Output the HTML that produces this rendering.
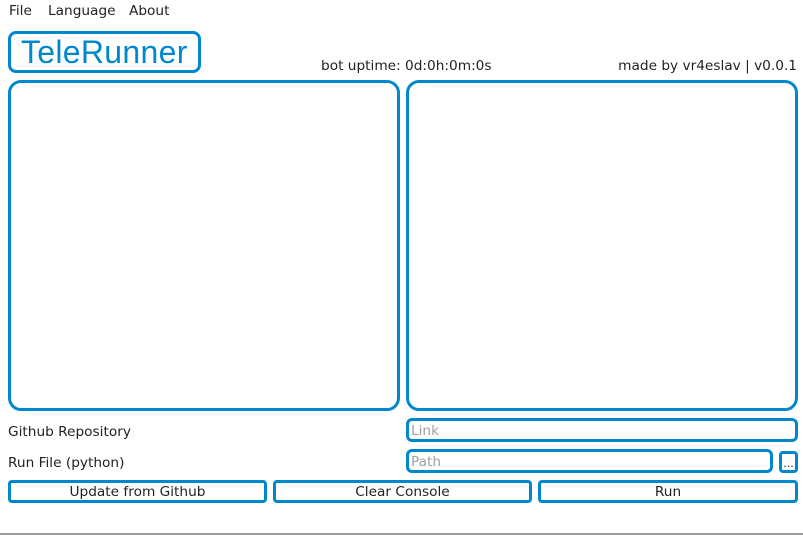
<!DOCTYPE html>
<html><head><meta charset="utf-8"><style>
*{box-sizing:border-box;margin:0;padding:0}
body{width:803px;height:535px;background:#fff;position:relative;overflow:hidden;font-family:"DejaVu Sans","Liberation Sans",sans-serif;font-size:13.7px;color:#222}
.a{position:absolute;white-space:nowrap}
.b{position:absolute;border:3px solid #0088cc}
.btn{display:flex;align-items:center;justify-content:center;border-radius:4px;padding-top:1px}
.ph{color:#a0a0a0;padding-left:2px;padding-top:2px;display:flex;align-items:center;border-radius:6px}
</style></head><body>
<div class="a" style="left:9px;top:3px">File</div>
<div class="a" style="left:48px;top:3px">Language</div>
<div class="a" style="left:129px;top:3px">About</div>
<div class="b" style="left:8px;top:31px;width:193px;height:42px;border-radius:8px"></div>
<div class="a" style="left:21px;top:34px;font-size:32px;color:#0088cc;font-family:'Liberation Sans',sans-serif;letter-spacing:0.3px">TeleRunner</div>
<div class="a" style="left:321px;top:58px">bot uptime:&nbsp;0d:0h:0m:0s</div>
<div class="a" style="right:6px;top:58px">made by vr4eslav | v0.0.1</div>
<div class="b" style="left:8px;top:80px;width:392px;height:331px;border-radius:13px"></div>
<div class="b" style="left:406px;top:80px;width:392px;height:331px;border-radius:13px"></div>
<div class="a" style="left:8px;top:424px">Github Repository</div>
<div class="a" style="left:8px;top:455px">Run File (python)</div>
<div class="b ph" style="left:406px;top:418px;width:392px;height:24px">Link</div>
<div class="b ph" style="left:406px;top:449px;width:367px;height:24px">Path</div>
<div class="b btn" style="left:779px;top:451px;width:19px;height:22px;font-size:11px;align-items:flex-end">...</div>
<div class="b btn" style="left:8px;top:480px;width:259px;height:23px">Update from Github</div>
<div class="b btn" style="left:273px;top:480px;width:259px;height:23px">Clear Console</div>
<div class="b btn" style="left:538px;top:480px;width:260px;height:23px">Run</div>
<div class="a" style="left:0;top:533px;width:803px;height:2px;background:#9a9a9a"></div>
</body></html>
